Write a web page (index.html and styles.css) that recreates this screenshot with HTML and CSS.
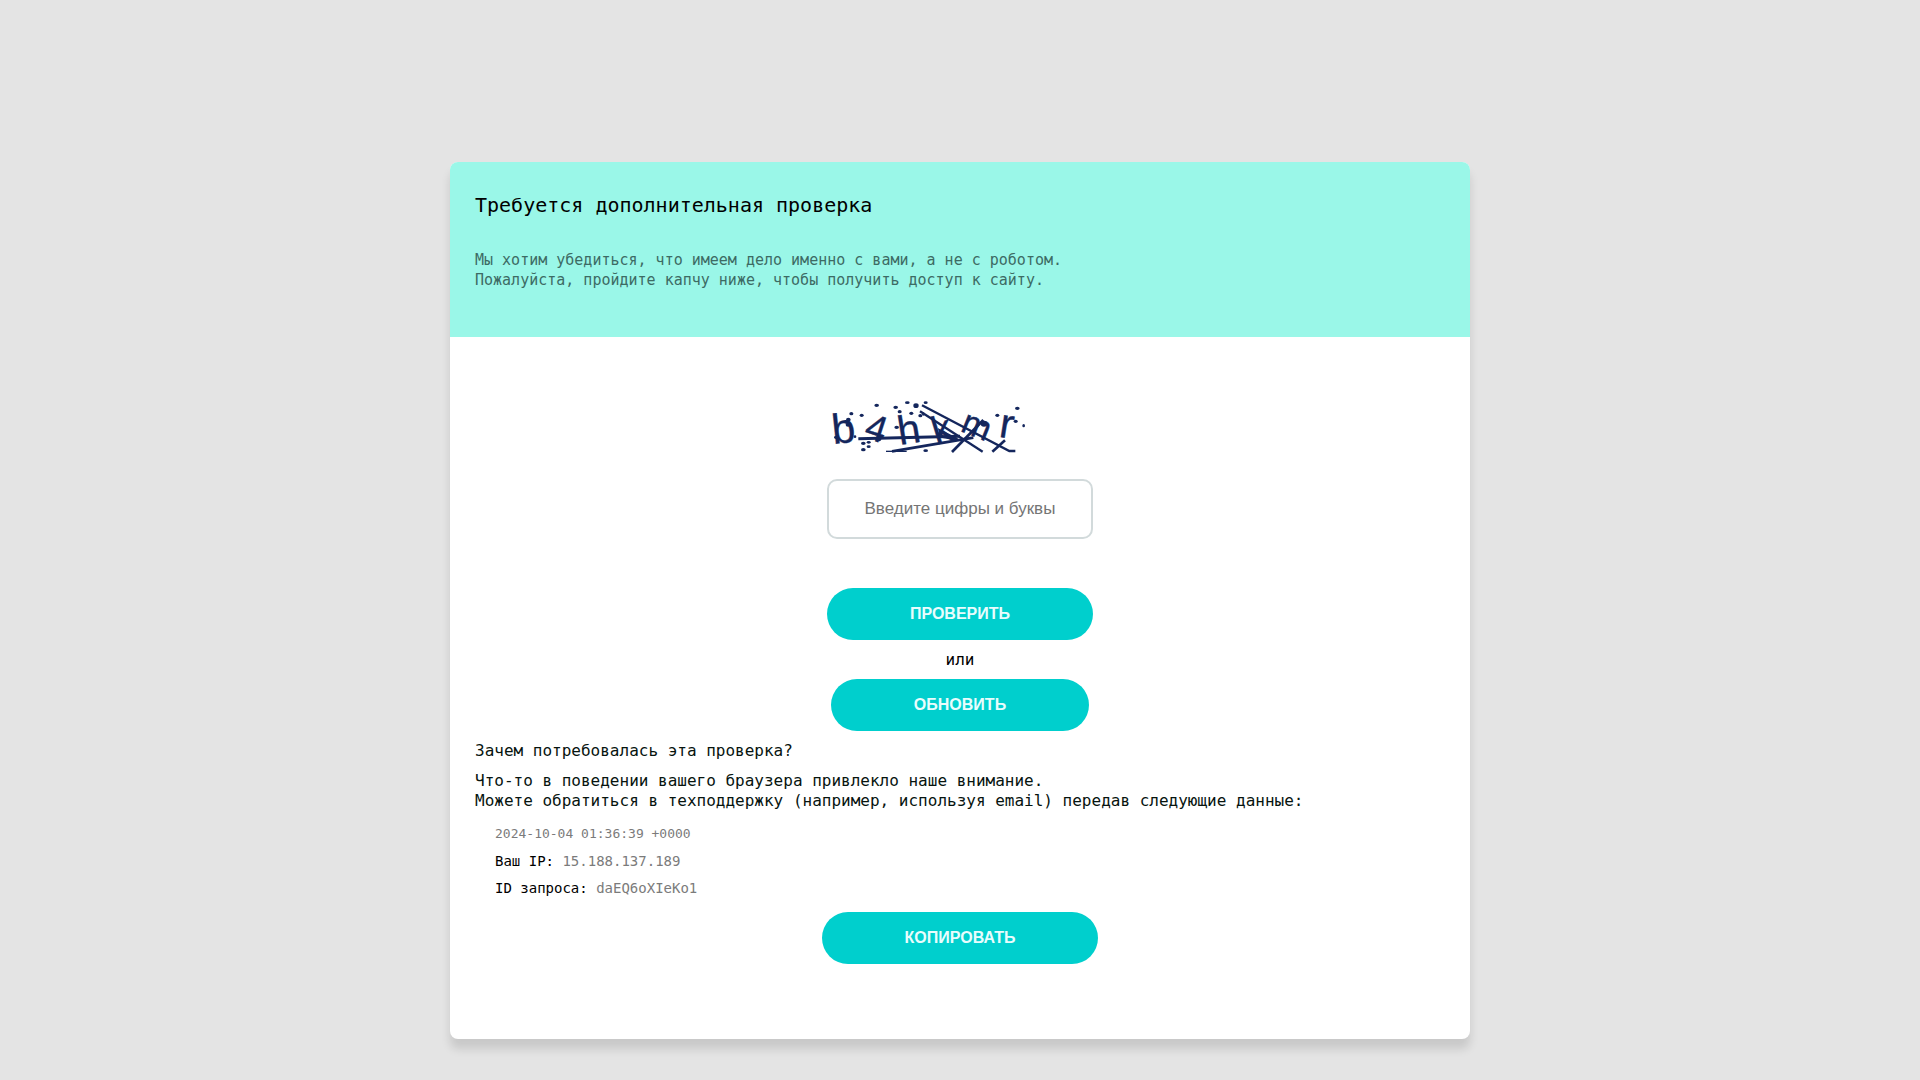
FILE: index.html
```html
<!DOCTYPE html>
<html lang="ru">

<head>
    <meta charset="UTF-8">
    <meta name="viewport" content="width=device-width, initial-scale=1">
    <title>Требуется дополнительная проверка</title>
    <link rel="stylesheet" href="styles.css">
</head>

<body>
    <main class="card">
        <header class="card-header">
            <h1 class="title">Требуется дополнительная проверка</h1>
            <p class="subtitle">Мы хотим убедиться, что имеем дело именно с вами, а не с роботом.<br>
                Пожалуйста, пройдите капчу ниже, чтобы получить доступ к сайту.</p>
        </header>

        <div class="card-body">
            <form class="form" onsubmit="return false">
                <svg class="captcha" viewBox="21 36 600 150" role="img" aria-label="Капча">
                    <!-- symbols -->
                    <g class="captcha-text">
                        <text x="40" y="162" font-size="126" transform="rotate(-6 40 162)">b</text>
                        <text x="128" y="142" font-size="112" transform="rotate(18 128 142)">4</text>
                        <text x="239" y="165" font-size="122" transform="rotate(-9 239 165)">h</text>
                        <text x="349" y="165" font-size="118" transform="rotate(-17 349 165)">k</text>
                        <text x="418" y="122" font-size="104" transform="rotate(22 418 122)">m</text>
                        <text x="534" y="140" font-size="126" transform="rotate(9 534 140)">r</text>
                    </g>
                    <!-- noise lines -->
                    <g class="captcha-lines">
                        <path d="M115 146 L420 139" stroke-width="9" />
                        <path d="M216 184 L460 143" stroke-width="8" />
                        <path d="M198 184 H260" stroke-width="4" />
                        <path d="M306 46 L568 183 H586" stroke-width="7" />
                        <path d="M300 64 L488 185" stroke-width="7" />
                        <path d="M396 186 L490 90" stroke-width="8" />
                        <path d="M517 185 L555 151" stroke-width="8" />
                        <path d="M360 122 L412 148 L366 140 Z" stroke-width="8" />
                    </g>
                    <!-- noise dots -->
                    <g class="captcha-dots">
                        <ellipse cx="170" cy="46" rx="7" ry="5" />
                        <ellipse cx="227" cy="52" rx="7" ry="5" />
                        <ellipse cx="262" cy="38" rx="7" ry="4" />
                        <ellipse cx="288" cy="47" rx="8" ry="7" />
                        <ellipse cx="317" cy="38" rx="6" ry="4" />
                        <ellipse cx="239" cy="65" rx="6" ry="5" />
                        <ellipse cx="274" cy="70" rx="6" ry="5" />
                        <ellipse cx="301" cy="77" rx="6" ry="5" />
                        <ellipse cx="310" cy="72" rx="4" ry="5" />
                        <ellipse cx="94" cy="71" rx="6" ry="5" />
                        <ellipse cx="125" cy="76" rx="6" ry="5" />
                        <ellipse cx="85" cy="89" rx="7" ry="6" />
                        <ellipse cx="84" cy="104" rx="7" ry="6" />
                        <ellipse cx="48" cy="142" rx="6" ry="5" />
                        <ellipse cx="105" cy="140" rx="4" ry="4" />
                        <ellipse cx="230" cy="112" rx="7" ry="5" />
                        <ellipse cx="130" cy="160" rx="7" ry="5" />
                        <ellipse cx="146" cy="157" rx="6" ry="4" />
                        <ellipse cx="146" cy="170" rx="6" ry="4" />
                        <ellipse cx="130" cy="179" rx="7" ry="5" />
                        <ellipse cx="175" cy="146" rx="9" ry="8" />
                        <ellipse cx="317" cy="182" rx="7" ry="4" />
                        <ellipse cx="492" cy="101" rx="10" ry="9" />
                        <ellipse cx="532" cy="76" rx="6" ry="5" />
                        <ellipse cx="592" cy="55" rx="7" ry="5" />
                        <ellipse cx="587" cy="94" rx="6" ry="5" />
                        <ellipse cx="611" cy="107" rx="4" ry="5" />
                    </g>
                </svg>
                <input class="input" type="text" name="captcha" placeholder="Введите цифры и буквы"
                    aria-label="Введите цифры и буквы" autocomplete="off">
                <button class="button" type="submit">ПРОВЕРИТЬ</button>
            </form>
            <p class="or">или</p>
            <button class="button" type="button" id="refresh">ОБНОВИТЬ</button>

            <section class="info">
                <h2 class="info-title">Зачем потребовалась эта проверка?</h2>
                <p class="info-text">Что-то в поведении вашего браузера привлекло наше внимание.<br>
                    Можете обратиться в техподдержку (например, используя email) передав следующие данные:</p>
                <ul class="details" id="details">
                    <li class="date">2024-10-04 01:36:39 +0000</li>
                    <li><span class="label">Ваш IP:</span> 15.188.137.189</li>
                    <li><span class="label">ID запроса:</span> daEQ6oXIeKo1</li>
                </ul>
            </section>
            <button class="button" type="button" id="copy">КОПИРОВАТЬ</button>
        </div>
    </main>

    <script>
        refresh.onclick = function () {
            location.reload();
        }
        copy.onclick = function () {
            navigator.clipboard.writeText(details.innerText);
        }
    </script>
</body>

</html>
```

FILE: styles.css
```css
* {
    box-sizing: border-box;
    margin: 0;
    padding: 0;
}

body {
    padding: 15vh 16px 40px;
    background: #e4e4e4;
    color: #000;
    font-family: "DejaVu Sans Mono", monospace;
    font-size: 16px;
    line-height: 20px;
}

.card {
    max-width: 1020px;
    margin: 0 auto;
    overflow: hidden;
    border-radius: 8px;
    background: #fff;
    box-shadow: 0 10px 10px rgba(0, 0, 0, 0.12);
}

/* header */
.card-header {
    padding: 31px 25px 47px;
    background: #9af7e8;
}

.title {
    margin-bottom: 33px;
    font-size: 20px;
    font-weight: normal;
    line-height: 24px;
}

.subtitle {
    color: #3d6b64;
    font-size: 15px;
}

/* body */
.card-body {
    display: flex;
    flex-direction: column;
    align-items: center;
    padding: 65px 25px 75px;
}

.form {
    display: flex;
    flex-direction: column;
}

.captcha {
    width: 200px;
    height: 50px;
    margin-bottom: 27px;
    overflow: visible;
}

.captcha-text {
    fill: #14265c;
    stroke: #14265c;
    font-family: "Liberation Sans", Arial, sans-serif;
}

.captcha-lines {
    fill: none;
    stroke: #14265c;
}

.captcha-dots {
    fill: #14265c;
}

.input {
    width: 266px;
    height: 60px;
    margin-bottom: 49px;
    border: 2px solid #d2dadb;
    border-radius: 10px;
    background: #fff;
    font-family: "Liberation Sans", Arial, sans-serif;
    font-size: 17px;
    text-align: center;
}

.input::placeholder {
    color: #757575;
}

.button {
    height: 52px;
    padding: 0 83px;
    border: none;
    border-radius: 26px;
    background: #00cfcd;
    color: #e8fdfd;
    font-family: "Liberation Sans", Arial, sans-serif;
    font-size: 16px;
    font-weight: bold;
    cursor: pointer;
}

.or {
    margin: 10px 0 9px;
}

/* info */
.info {
    align-self: stretch;
    margin: 10px 0 14px;
}

.info-title {
    margin-bottom: 10px;
    font-size: 16px;
    font-weight: normal;
}

.info-title,
.info-text {
    color: #07140f;
}

.details {
    display: flex;
    flex-direction: column;
    gap: 7px;
    margin-top: 13px;
    padding-left: 20px;
    list-style: none;
    color: #7b7b7b;
    font-size: 14px;
}

.details .date {
    font-size: 13px;
}

.label {
    color: #000;
}
```
